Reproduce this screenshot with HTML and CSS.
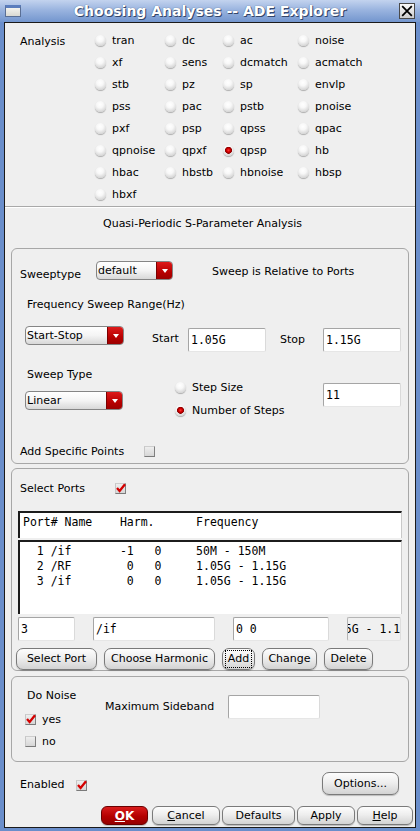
FILE: index.html
```html
<!DOCTYPE html>
<html>
<head>
<meta charset="utf-8">
<title>Choosing Analyses -- ADE Explorer</title>
<link rel="stylesheet" href="styles.css">
</head>
<body>
<div class="window">
  <div class="titlebar">
    <span class="win-icon"></span>
    <span class="title">Choosing Analyses -- ADE Explorer</span>
    <span class="close"><svg viewBox="0 0 16 16" width="14" height="14"><path d="M2.5 2.5 L13.5 13.5 M13.5 2.5 L2.5 13.5" stroke="#000" stroke-width="2" fill="none"/></svg></span>
  </div>
  <div class="client">
    <section class="analysis">
      <div class="analysis-label">Analysis</div>
      <div class="radio-grid">
        <div class="radio"><span class="rb"></span>tran</div>
        <div class="radio"><span class="rb"></span>dc</div>
        <div class="radio"><span class="rb"></span>ac</div>
        <div class="radio"><span class="rb"></span>noise</div>
        <div class="radio"><span class="rb"></span>xf</div>
        <div class="radio"><span class="rb"></span>sens</div>
        <div class="radio"><span class="rb"></span>dcmatch</div>
        <div class="radio"><span class="rb"></span>acmatch</div>
        <div class="radio"><span class="rb"></span>stb</div>
        <div class="radio"><span class="rb"></span>pz</div>
        <div class="radio"><span class="rb"></span>sp</div>
        <div class="radio"><span class="rb"></span>envlp</div>
        <div class="radio"><span class="rb"></span>pss</div>
        <div class="radio"><span class="rb"></span>pac</div>
        <div class="radio"><span class="rb"></span>pstb</div>
        <div class="radio"><span class="rb"></span>pnoise</div>
        <div class="radio"><span class="rb"></span>pxf</div>
        <div class="radio"><span class="rb"></span>psp</div>
        <div class="radio"><span class="rb"></span>qpss</div>
        <div class="radio"><span class="rb"></span>qpac</div>
        <div class="radio"><span class="rb"></span>qpnoise</div>
        <div class="radio"><span class="rb"></span>qpxf</div>
        <div class="radio"><span class="rb on"></span>qpsp</div>
        <div class="radio"><span class="rb"></span>hb</div>
        <div class="radio"><span class="rb"></span>hbac</div>
        <div class="radio"><span class="rb"></span>hbstb</div>
        <div class="radio"><span class="rb"></span>hbnoise</div>
        <div class="radio"><span class="rb"></span>hbsp</div>
        <div class="radio"><span class="rb"></span>hbxf</div>
      </div>
    </section>
    <div class="separator"></div>
    <div class="subtitle">Quasi-Periodic S-Parameter Analysis</div>

    <div class="group g1">
      <div class="row r-sweeptype">
        <span class="lbl sweeptype-lbl">Sweeptype</span>
        <div class="combo combo-default"><span class="combo-text">default</span><span class="combo-btn"></span></div>
        <span class="lbl rel-lbl">Sweep is Relative to Ports</span>
      </div>
      <div class="lbl freq-lbl">Frequency Sweep Range(Hz)</div>
      <div class="row r-range">
        <div class="combo combo-startstop"><span class="combo-text">Start-Stop</span><span class="combo-btn"></span></div>
        <span class="lbl start-lbl">Start</span>
        <div class="field f-start">1.05G</div>
        <span class="lbl stop-lbl">Stop</span>
        <div class="field f-stop">1.15G</div>
      </div>
      <div class="row r-type">
        <div class="col-type">
          <div class="lbl type-lbl">Sweep Type</div>
          <div class="combo combo-linear"><span class="combo-text">Linear</span><span class="combo-btn"></span></div>
        </div>
        <div class="col-steps">
          <div class="radio step"><span class="rb"></span>Step Size</div>
          <div class="radio step"><span class="rb on"></span>Number of Steps</div>
        </div>
        <div class="field f-steps">11</div>
      </div>
      <div class="row r-points">
        <span class="lbl points-lbl">Add Specific Points</span>
        <span class="cb cb-points"></span>
      </div>
    </div>

    <div class="group g2">
      <div class="row r-select">
        <span class="lbl select-lbl">Select Ports</span>
        <span class="cb cb-select"><svg viewBox="0 0 11 11" width="11" height="11"><path d="M2 5 L4.6 8 L10 1.2" fill="none" stroke="#d40000" stroke-width="2.3"/></svg></span>
      </div>
      <div class="hdr mono">Port# Name    Harm.      Frequency</div>
      <div class="list">
        <div class="list-row mono">  1 /if       -1   0     50M - 150M</div>
        <div class="list-row mono">  2 /RF        0   0     1.05G - 1.15G</div>
        <div class="list-row mono">  3 /if        0   0     1.05G - 1.15G</div>
      </div>
      <div class="row fields-row">
        <div class="field f-port">3</div>
        <div class="field f-name">/if</div>
        <div class="field f-harm">0 0</div>
        <div class="field f-freq ro"><span class="ro-text">1.05G - 1.15G</span></div>
      </div>
      <div class="row btn-row">
        <div class="btn b-select">Select Port</div>
        <div class="btn b-harm">Choose Harmonic</div>
        <div class="btn b-add"><span class="focus">Add</span></div>
        <div class="btn b-change">Change</div>
        <div class="btn b-delete">Delete</div>
      </div>
    </div>

    <div class="group g3">
      <div class="row noise-row">
        <div class="noise-left">
          <div class="lbl noise-lbl">Do Noise</div>
          <div class="check-row yes-row"><span class="cb"><svg viewBox="0 0 11 11" width="11" height="11"><path d="M2 5 L4.6 8 L10 1.2" fill="none" stroke="#d40000" stroke-width="2.3"/></svg></span>yes</div>
          <div class="check-row"><span class="cb"></span>no</div>
        </div>
        <span class="lbl maxsb-lbl">Maximum Sideband</span>
        <div class="field f-maxsb"></div>
      </div>
    </div>

    <div class="row enabled-row">
      <span class="lbl enabled-lbl">Enabled</span>
      <span class="cb cb-enabled"><svg viewBox="0 0 11 11" width="11" height="11"><path d="M2 5 L4.6 8 L10 1.2" fill="none" stroke="#d40000" stroke-width="2.3"/></svg></span>
      <span class="spacer"></span>
      <div class="btn b-options">Options...</div>
    </div>

    <div class="row bottom-row">
      <div class="btn small b-ok"><span><u>O</u>K</span></div>
      <div class="btn small b-cancel"><span><u>C</u>ancel</span></div>
      <div class="btn small b-defaults">Defaults</div>
      <div class="btn small b-apply">Apply</div>
      <div class="btn small b-help"><span><u>H</u>elp</span></div>
    </div>
  </div>
</div>
</body>
</html>
```

FILE: styles.css
```css
* { box-sizing: border-box; }
html, body { margin: 0; padding: 0; }
body {
  width: 420px;
  height: 831px;
  overflow: hidden;
  font-family: "DejaVu Sans", sans-serif;
  font-size: 11px;
  color: #000;
  background: #6b8fca;
}
.window {
  display: flex;
  flex-direction: column;
  width: 420px;
  height: 831px;
  background: #6a8ecb;
}
.titlebar {
  flex: none;
  height: 22px;
  display: flex;
  align-items: center;
  padding: 0 5px 0 5px;
  background: linear-gradient(#c3d3ee, #9ab4df 45%, #7396ce);
}
.win-icon {
  flex: none;
  width: 16px;
  height: 12px;
  border: 1px solid #5a6f95;
  border-top: 3px solid #5a7dbd;
  background: linear-gradient(#f3f3ee, #d9d9d2);
}
.title {
  flex: 1;
  text-align: center;
  font-weight: bold;
  font-size: 14px;
  line-height: 22px;
  color: #fff;
  text-shadow: 1px 1px 0 #34466a, 0 0 1px #34466a;
}
.close {
  flex: none;
  width: 16px;
  height: 16px;
  border: 1px solid #4a4a4a;
  background: linear-gradient(#fafafa, #cdcdcd);
  display: flex;
  align-items: center;
  justify-content: center;
}
.client {
  flex: 1;
  margin: 0 4px 3px 4px;
  border: 1px solid #1a1a1a;
  background: #efefef;
  display: flex;
  flex-direction: column;
}

/* analysis radios */
.analysis {
  display: flex;
  height: 182px;
  padding: 6px 0 0 15px;
}
.analysis-label {
  width: 75px;
  line-height: 22px;
  padding-top: 2px;
}
.radio-grid {
  display: grid;
  grid-template-columns: 70px 58px 75px 1fr;
  grid-auto-rows: 22px;
}
.radio {
  display: flex;
  align-items: center;
  gap: 6px;
  white-space: nowrap;
}
.rb {
  flex: none;
  width: 11px;
  height: 11px;
  border-radius: 50%;
  background: radial-gradient(circle at 45% 32%, #ffffff 0, #f7f7f7 35%, #d9d9d9 72%, #a9a9a9 100%);
  box-shadow: 0 1px 1px rgba(0,0,0,0.28);
}
.rb.on {
  background:
    radial-gradient(circle at 50% 48%, #ff3a3a 0, #dc0000 1.6px, #8a0000 3.2px, rgba(0,0,0,0) 3.8px),
    radial-gradient(circle at 45% 32%, #ffffff 0, #f7f7f7 35%, #d9d9d9 72%, #a9a9a9 100%);
}
.separator {
  margin-top: 1px;
  height: 2px;
  border-top: 1px solid #a9a9a9;
  border-bottom: 1px solid #ffffff;
}
.subtitle {
  margin-top: 9px;
  line-height: 14px;
  padding-left: 98px;
}

/* groups */
.group {
  flex: none;
  margin: 0 6px;
  border: 1px solid #a7a7a7;
  border-radius: 6px;
  display: flex;
  flex-direction: column;
}
.g1 { margin-top: 17px; height: 216px; }
.g2 { margin-top: 4px; height: 203px; }
.g3 { margin-top: 5px; height: 86px; }
.row { display: flex; align-items: flex-start; }
.lbl { line-height: 14px; white-space: nowrap; }

/* combo */
.combo {
  flex: none;
  display: flex;
  height: 19px;
  border: 1px solid #858585;
  border-radius: 4px;
  overflow: hidden;
  background: linear-gradient(#ffffff, #f4f4f4 50%, #d8d8d8);
}
.combo-text {
  flex: 1;
  line-height: 17px;
  padding-left: 1px;
}
.combo-btn {
  flex: none;
  width: 16px;
  background: linear-gradient(#dd1a1a, #b80000 60%, #9c0000);
  border-left: 1px solid #7a0000;
  display: flex;
  align-items: center;
  justify-content: center;
}
.combo-btn::after {
  content: "";
  width: 0;
  height: 0;
  border-left: 3.5px solid transparent;
  border-right: 3.5px solid transparent;
  border-top: 4px solid #ffffff;
}

/* text field */
.field {
  flex: none;
  height: 24px;
  background: #ffffff;
  border: 1px solid;
  border-color: #a5a5a5 #dadada #e6e6e6 #a5a5a5;
  border-radius: 2px;
  font-family: "DejaVu Sans Mono", monospace;
  font-size: 11.5px;
  line-height: 22px;
  padding-left: 2px;
  white-space: pre;
  overflow: hidden;
}
.mono {
  font-family: "DejaVu Sans Mono", monospace;
  font-size: 11.5px;
  white-space: pre;
}

/* checkbox */
.cb {
  flex: none;
  display: block;
  width: 11px;
  height: 11px;
  border: 1px solid;
  border-color: #cdcdcd #808080 #7a7a7a #c6c6c6;
  background: linear-gradient(#eeeeee, #d6d6d6);
  overflow: visible;
}
.cb svg { display: block; margin: -1px 0 0 -1px; overflow: visible; }

/* buttons */
.btn {
  flex: none;
  height: 22px;
  border: 1px solid #7a7a7a;
  border-radius: 7px;
  background: linear-gradient(#fdfdfd, #eeeeee 45%, #d3d3d3);
  box-shadow: 0 1px 1px rgba(0,0,0,0.22);
  display: flex;
  align-items: center;
  justify-content: center;
  white-space: nowrap;
  line-height: 14px;
}
.btn.small { height: 19px; border-radius: 6px; }

/* group 1 rows */
.r-sweeptype { margin-top: 12px; padding-left: 8px; height: 19px; }
.sweeptype-lbl { width: 76px; margin-top: 7px; }
.combo-default { width: 77px; }
.rel-lbl { margin-left: 39px; margin-top: 4px; }
.freq-lbl { margin-top: 18px; padding-left: 15px; }
.r-range { margin-top: 14px; padding-left: 13px; }
.combo-startstop { width: 99px; }
.start-lbl { margin-left: 28px; width: 36px; margin-top: 6px; }
.f-start { margin-top: 2px; width: 78px; }
.stop-lbl { margin-left: 14px; width: 43px; margin-top: 7px; }
.f-stop { margin-top: 2px; width: 78px; }
.r-type { margin-top: 16px; padding-left: 13px; }
.col-type { width: 98px; flex: none; }
.type-lbl { padding-left: 2px; }
.combo-linear { width: 98px; margin-top: 9px; }
.col-steps { flex: 1; margin-left: 52px; margin-top: 8px; }
.radio.step { height: 23px; }
.f-steps { margin-top: 15px; width: 78px; margin-right: 7px; }
.r-points { margin-top: 23px; padding-left: 8px; }
.points-lbl { width: 124px; }
.cb-points { margin-top: 1px; }

/* group 2 */
.r-select { margin-top: 13px; padding-left: 8px; }
.select-lbl { width: 95px; }
.cb-select { margin-top: 1px; }
.hdr, .list {
  flex: none;
  margin-left: 6px;
  width: 384px;
  background: #ffffff;
  border-top: 2px solid #1c1c1c;
  border-left: 2px solid #1c1c1c;
  border-right: 1px solid #c9c9c9;
  line-height: 15px;
  padding: 2px 3px 0 3px;
}
.hdr { margin-top: 15px; height: 27px; }
.list { margin-top: 2px; height: 74px; white-space: normal; }
.list-row { height: 15px; line-height: 15px; }
.fields-row { margin-top: 3px; padding-left: 6px; gap: 18px; }
.f-port { width: 57px; }
.f-name { width: 122px; }
.f-harm { width: 96px; }
.f-freq { width: 54px; padding-left: 0; }
.field.ro { background: #f0f0f0; border-color: #b5b5b5 #dedede #e4e4e4 #b5b5b5; }
.ro-text { display: block; margin-left: -24px; }
.btn-row { margin-top: 7px; padding-left: 4px; gap: 7px; }
.b-select { width: 81px; }
.b-harm { width: 111px; }
.b-add { width: 33px; }
.b-add .focus { outline: 1px dotted #000; outline-offset: 1px; padding: 0 1px; }
.b-change { width: 55px; }
.b-delete { width: 49px; }

/* group 3 */
.noise-left { flex: none; width: 80px; margin-left: 13px; margin-top: 12px; }
.noise-lbl { padding-left: 2px; }
.check-row { display: flex; align-items: center; gap: 6px; height: 22px; }
.yes-row { margin-top: 5px; }
.maxsb-lbl { width: 123px; margin-top: 23px; }
.f-maxsb { width: 92px; margin-top: 18px; }

/* enabled + bottom */
.enabled-row { margin-top: 10px; padding: 0 16px 0 15px; height: 23px; }
.enabled-lbl { width: 56px; margin-top: 6px; }
.cb-enabled { margin-top: 8px; }
.spacer { flex: 1; }
.b-options { width: 77px; height: 23px; }
.bottom-row { margin-top: 11px; justify-content: flex-end; padding-right: 2px; gap: 2px; }
.b-ok {
  width: 47px;
  margin-right: 2px;
  background: linear-gradient(#d91c1c, #b40000 55%, #960000);
  border-color: #6a0000;
  color: #ffffff;
  font-weight: bold;
  font-size: 12px;
}
.b-cancel { width: 68px; }
.b-defaults { width: 73px; }
.b-apply { width: 58px; }
.b-help { width: 56px; }
```
